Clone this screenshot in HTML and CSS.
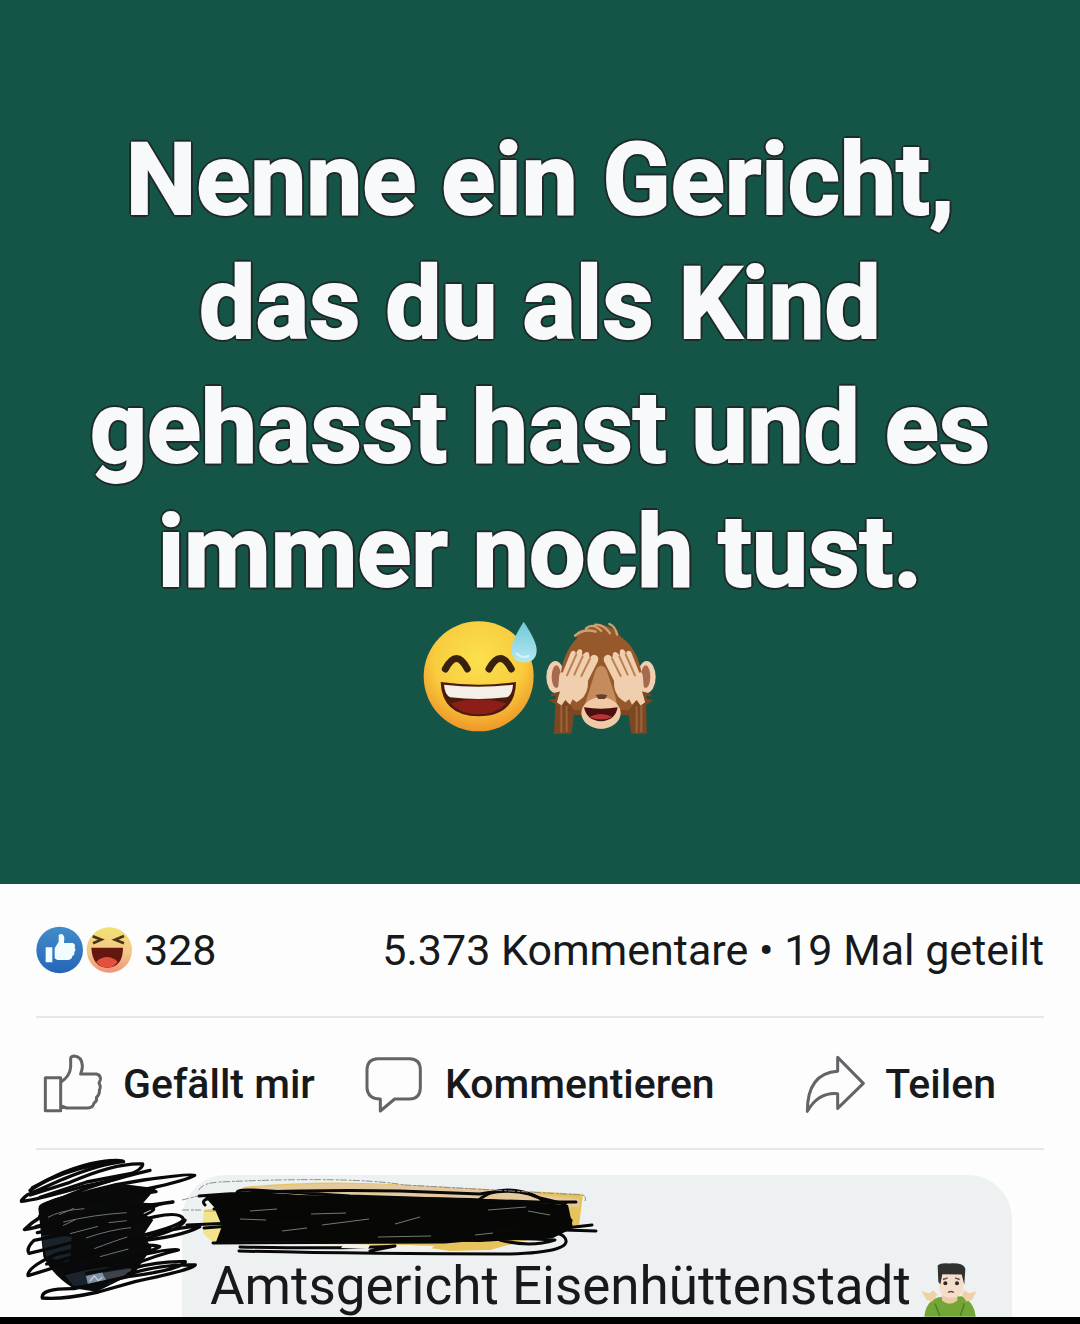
FILE: index.html
```html
<!DOCTYPE html>
<html lang="de">
<head>
<meta charset="utf-8">
<meta name="viewport" content="width=device-width, initial-scale=1">
<title>Beitrag</title>
<link rel="stylesheet" href="styles.css">
</head>
<body>
<main class="post">
  <section class="banner">
    <h1 class="banner-text">Nenne ein Gericht,<br>das du als Kind<br>gehasst hast und es<br>immer noch tust.</h1>
    <div class="banner-emojis">
      <svg class="emoji" viewBox="63 57 348 348" role="img" aria-label="Lachen mit Schweißtropfen">
        <defs>
          <radialGradient id="face" cx=".5" cy=".35" r=".68"><stop offset="0" stop-color="#fbe04f"/><stop offset=".6" stop-color="#f8cc3d"/><stop offset="1" stop-color="#ee8f25"/></radialGradient>
          <linearGradient id="drop" x1="0" y1="0" x2="0" y2="1"><stop offset="0" stop-color="#72c8d6"/><stop offset="1" stop-color="#b4e8f2"/></linearGradient>
        </defs>
        <circle cx="236" cy="229" r="165" fill="url(#face)"/>
        <path d="M136 207Q170 144 202 207M267 207Q301 144 334 207" fill="none" stroke="#38210e" stroke-width="21" stroke-linecap="round"/>
        <path d="M122 246Q236 262 348 246Q347 348 235 349Q126 347 122 246Z" fill="#4b1b0d"/>
        <path d="M151 310Q235 285 319 310Q291 343 235 343Q180 343 151 310Z" fill="#8c1d17"/>
        <path d="M132 254Q236 266 339 254Q337 286 320 292Q235 302 151 292Q134 284 132 254Z" fill="#f4f0e8"/>
        <path d="M371 65Q334 124 334 149Q336 187 373 187Q410 186 410 149Q409 122 371 65Z" fill="url(#drop)"/>
        <path d="M350 160q14 16 36 8" fill="none" stroke="#d2f5fa" stroke-width="6" stroke-linecap="round"/>
      </svg>
      <svg class="emoji" viewBox="429 57 348 348" role="img" aria-label="Affe hält sich die Augen zu">
        <path d="M467 285L462 401H514L522 345H686L694 401H740L738 285Z" fill="#7d4722"/>
        <path d="M484 398V315M500 396V318M710 398V318M724 397V310" stroke="#9b6439" stroke-width="6"/>
        <ellipse cx="466" cy="231" rx="27" ry="48" fill="#f1ceb0"/><ellipse cx="740" cy="231" rx="27" ry="48" fill="#f1ceb0"/>
        <ellipse cx="469" cy="230" rx="14" ry="34" fill="#a66b4d"/><ellipse cx="737" cy="230" rx="14" ry="34" fill="#a66b4d"/>
        <path d="M480 270Q477 168 533 112L522 108L544 99L532 94L559 87Q566 71 607 74Q651 84 660 109Q726 151 730 270L688 330H522Z" fill="#97582b"/>
        <path d="M525 107Q552 84 587 95M558 85Q579 67 604 93M586 74Q610 72 630 100M628 72Q647 80 651 104" fill="none" stroke="#d0a170" stroke-width="7" stroke-linecap="round"/>
        <path d="M587 210Q603 185 620 210L647 293L657 340Q645 384 603 386Q558 384 546 340L561 293Z" fill="#c58b5d"/>
        <ellipse cx="603" cy="339" rx="59" ry="47" fill="#efc9a8"/>
        <path d="M587 286Q603 279 622 286L615 297H595Z" fill="#66402e"/>
        <path d="M552 322Q603 330 653 322Q646 362 603 364Q560 362 552 322Z" fill="#4a1010"/>
        <path d="M568 351Q602 333 637 351Q603 366 568 351Z" fill="#b73534"/>
        <g id="hand">
          <path d="M471 309L477 235Q478 213 488 218L509 165Q515 148 525 154L528 161Q535 142 546 151L547 167Q559 150 567 160L569 174Q581 157 593 170Q598 178 590 191L564 242Q566 281 540 300L530 307L518 298L510 314L496 300L485 316Z" fill="#efcfae"/>
          <path d="M501 226L529 163M523 224L548 169M544 228L570 176" fill="none" stroke="#bd8056" stroke-width="6" stroke-linecap="round"/>
        </g>
        <use href="#hand" transform="translate(1206 0) scale(-1 1)"/>
        <path d="M453 286L474 280L468 300L456 302L475 315M752 286L732 280L738 300L750 302L731 315" fill="none" stroke="#7d4722" stroke-width="8"/>
      </svg>
    </div>
  </section>

  <section class="stats">
    <svg class="reactions" viewBox="48 75 288 150" role="img" aria-label="Gefällt mir und Haha">
      <defs>
        <linearGradient id="blue" x1="0" y1="0" x2="0" y2="1"><stop offset="0" stop-color="#438cca"/><stop offset="1" stop-color="#2565b8"/></linearGradient>
        <linearGradient id="haha" x1="0" y1="0" x2="0" y2="1"><stop offset="0" stop-color="#f2e171"/><stop offset=".55" stop-color="#f3c88a"/><stop offset="1" stop-color="#ee9277"/></linearGradient>
      </defs>
      <circle cx="119" cy="150" r="70" fill="url(#blue)"/>
      <path d="M77 142H97V187H77ZM104 145L116 125V105Q129 97 133 113L132 129H158Q168 132 164 143Q169 150 163 156Q165 165 157 168Q156 179 145 180H112L104 175Z" fill="#f1fcff"/>
      <circle cx="268" cy="150" r="68" fill="url(#haha)"/>
      <path d="M218 109L244 119L219 130M312 108L285 119L312 130" fill="none" stroke="#4b3516" stroke-width="8"/>
      <path d="M214 143H309Q309 201 262 203Q217 201 214 143Z" fill="#64170f"/>
      <path d="M229 185Q261 157 293 185Q283 202 262 203Q239 202 229 185Z" fill="#e4503d"/>
    </svg>
    <span class="reaction-count">328</span>
    <span class="share-info">5.373 Kommentare • 19 Mal geteilt</span>
  </section>

  <section class="actions">
    <button class="action" type="button">
      <svg class="action-icon" viewBox="69 69 180 180" aria-hidden="true"><path d="M76 140H122V239H76ZM124 152Q150 135 152 108V82Q153 75 163 75Q185 77 187 103Q188 113 182 129H229Q243 132 241 147L237 156Q244 168 238 177Q240 190 229 200Q232 210 222 216Q219 231 203 231H140L124 225"/></svg>
      <span>Gefällt mir</span>
    </button>
    <button class="action" type="button">
      <svg class="action-icon" viewBox="1035 72 180 180" aria-hidden="true"><path d="M1073 86H1169Q1201 87 1201 119V174Q1200 207 1168 207H1124L1081 243V207Q1043 207 1041 174V119Q1042 87 1073 86Z"/></svg>
      <span>Kommentieren</span>
    </button>
    <button class="action action-share" type="button">
      <svg class="action-icon" viewBox="255 69 180 180" aria-hidden="true"><path d="M353 79L430 157L353 232V188Q295 183 262 241Q262 127 353 121Z"/></svg>
      <span>Teilen</span>
    </button>
  </section>

  <article class="comment">
    <svg class="avatar" viewBox="0 30 546 501" role="img" aria-label="Unkenntlich gemachtes Profilbild">
      <path d="M115 205Q150 167 250 158L350 130L468 145L430 188L490 192L430 220L460 240L430 285L455 324L405 398L290 455L220 445Q157 405 130 350Z" fill="#090a0b"/>
      <path d="M123 285L215 290L210 370L138 350ZM190 400L315 382L404 384L330 430L220 438Z" fill="#1a232c"/>
      <path d="M310 398L404 384L370 408L318 420Z" fill="#3d424b"/>
      <path d="M258 408L307 397L320 424L264 434Z" fill="#7e91a5"/>
      <path d="M270 423l13-15 12 14 12-10" fill="none" stroke="#c0cfda" stroke-width="4"/>
      <g fill="none" stroke="#090909" stroke-width="10" stroke-linecap="round" stroke-linejoin="round">
        <path d="M90 151Q190 85 300 66Q365 57 371 65Q300 72 188 118L83 164Q62 180 64 184Q105 181 245 141Q430 104 428 72Q350 67 210 127L91 165"/>
        <path d="M97 143Q190 92 300 72L355 66M120 172L260 126L395 100M450 91Q290 128 181 176Q113 196 122 204Q280 141 431 120Q579 99 584 106Q560 121 440 147L250 186Q114 218 119 231Q270 177 468 155Q445 144 376 151L191 199Q112 228 73 269Q140 256 270 220L519 186Q430 197 310 243L112 278"/>
        <path d="M108 260Q320 201 416 205Q507 196 414 234L224 277L102 301Q77 325 87 340Q230 309 395 249Q540 204 551 239Q537 261 372 300L170 342Q81 382 84 407Q220 367 415 291Q570 255 599 260Q540 291 403 304L193 358"/>
        <path d="M140 372Q405 300 479 320Q421 350 302 374L190 402M388 307Q540 274 555 241M400 350Q526 322 535 330Q466 346 397 376L260 400M397 385Q480 362 556 365Q543 389 384 410L222 446Q120 445 127 474Q186 480 295 456L405 425Q588 386 586 375Q487 372 385 402"/>
      </g>
      <path d="M144 232Q180 211 253 206M190 246Q280 224 380 218M189 257L226 239M258 294Q330 269 393 263M283 326Q340 304 382 291M300 350L385 327M210 281L294 259M177 224L222 205M326 248L380 242" fill="none" stroke="#6f7274" stroke-width="3"/>
    </svg>
    <div class="bubble">
      <svg class="author" viewBox="182 1175 430 81" role="img" aria-label="Unkenntlich gemachter Name">
        <path d="M204 1210L222 1208L244 1187Q320 1179 410 1185L583 1194L579 1226L490 1250L450 1251L410 1245L217 1243L203 1233Z" fill="#e7c45b"/>
        <path d="M244 1188Q350 1178 500 1191L579 1199V1207L245 1199Z" fill="#e4c99d"/>
        <path d="M204 1212H224V1238L213 1243L203 1233Z" fill="#f2e48d"/>
        <path d="M205 1197Q240 1189 300 1195L470 1198L568 1205L573 1228L553 1238L480 1242L390 1241L216 1242L222 1226L214 1207Z" fill="#070705"/>
        <g fill="none" stroke="#080808" stroke-width="3" stroke-linecap="round" stroke-linejoin="round">
          <path d="M199 1196Q280 1189 400 1191L480 1194Q525 1186 545 1202H576M205 1205Q196 1196 240 1196Q230 1189 253 1190L350 1196L566 1203M214 1209Q350 1199 483 1205Q550 1207 571 1220Q572 1230 540 1231L592 1225M187 1225L282 1221L596 1231M204 1228Q360 1215 500 1231L571 1229M213 1243L445 1242Q505 1236 555 1240Q530 1248 500 1240M239 1251Q360 1254 510 1254Q574 1252 565 1238Q560 1231 548 1235M240 1247Q350 1249 395 1246L370 1251"/>
          <path d="M475 1203Q500 1180 540 1198L565 1204M490 1218Q520 1205 568 1219"/>
        </g>
        <path d="M250 1211L277 1209M240 1219L266 1220M282 1231L307 1228M311 1214L346 1213M322 1225L369 1219M395 1224L420 1217M378 1237L431 1236M488 1210L526 1207M528 1211L550 1215M475 1235L493 1233" fill="none" stroke="#77786d" stroke-width="1"/>
        <path d="M344 1244L370 1245L368 1249L341 1248ZM400 1245L434 1246L430 1250L397 1250Z" fill="#f3f2ec"/>
        <path d="M182 1200L198 1196M182 1210H201M199 1190Q202 1183 220 1182Q350 1176 405 1185L582 1195Q587 1196 585 1201" fill="none" stroke="#8b8d8e" stroke-width="1" stroke-dasharray="7 2 3 1"/>
      </svg>
      <p class="comment-text">Amtsgericht Eisenhüttenstadt
        <svg class="shrug" viewBox="180 306 168 164" role="img" aria-label="Schulterzuckender Mann">
          <path d="M190 470Q194 423 232 411L302 408Q340 425 344 470Z" fill="#74a635"/>
          <path d="M222 430L236 467M310 430L298 467" stroke="#4f812e" stroke-width="5"/>
          <path d="M182 393L204 399L218 390L229 403L214 424L197 420ZM346 393L324 399L310 390L302 403L316 424L333 420Z" fill="#efd0a7"/>
          <path d="M243 402H289V421Q266 440 243 421Z" fill="#e9cda8"/>
          <path d="M236 342Q268 323 309 342L307 389Q298 413 270 413Q240 412 235 387Z" fill="#f5ddcc"/>
          <path d="M232 365L230 316Q240 307 264 310Q308 307 313 326L310 374L302 343L244 342L238 373Z" fill="#303130"/>
          <path d="M246 358l14-5M282 353l14 5M261 397q9-6 18 0" fill="none" stroke="#624c41" stroke-width="4"/>
          <circle cx="253" cy="369" r="6" fill="#302925"/><circle cx="288" cy="369" r="6" fill="#302925"/>
        </svg>
      </p>
    </div>
  </article>
</main>
</body>
</html>
```
FILE: styles.css
```css
* {
  box-sizing: border-box;
}

body {
  margin: 0;
  background: #fdfdfd;
  color: #17191b;
  font-family: Roboto, "Liberation Sans", sans-serif;
}

svg {
  display: block;
  flex: none;
}

.post {
  border-bottom: 7px solid #000;
}

.banner {
  padding: 118px 40px 149px;
  background: #145548;
  text-align: center;
}

.banner-text {
  margin: 0;
  color: #f8f9fa;
  font-size: 100px;
  font-weight: 700;
  line-height: 124px;
  -webkit-text-stroke: 2px #f8f9fa;
  text-shadow:
    3px 0 #20292a,
    -3px 0 #20292a,
    0 3px #20292a,
    0 -3px #20292a,
    2px 2px #20292a,
    -2px 2px #20292a,
    2px -2px #20292a,
    -2px -2px #20292a;
}

.banner-emojis {
  display: flex;
  justify-content: center;
  gap: 6px;
  padding-top: 5px;
}

.emoji {
  width: 116px;
  height: 116px;
}

.stats {
  display: flex;
  align-items: center;
  margin: 0 36px;
  height: 134px;
  border-bottom: 2px solid #e6e7e8;
  font-size: 43px;
  line-height: 48px;
}

.reactions {
  width: 96px;
  height: 50px;
}

.reaction-count {
  margin-left: 12px;
}

.share-info {
  margin-left: auto;
}

.actions {
  display: flex;
  align-items: center;
  gap: 50px;
  margin: 0 36px;
  padding: 2px 48px 0 7px;
  height: 132px;
  border-bottom: 2px solid #e6e7e8;
}

.action {
  display: flex;
  align-items: center;
  gap: 20px;
  padding: 0;
  border: 0;
  background: none;
  color: #17191b;
  font: 500 41px/48px Roboto, "Liberation Sans", sans-serif;
  white-space: nowrap;
}

.action-share {
  margin-left: auto;
}

.action-icon {
  width: 60px;
  height: 60px;
  fill: none;
  stroke: #626467;
  stroke-width: 9px;
  stroke-linejoin: round;
}

.comment {
  display: flex;
}

.avatar {
  position: relative;
  width: 182px;
  height: 167px;
  overflow: visible;
}

.bubble {
  flex: 1;
  margin: 25px 68px 0 0;
  border-radius: 44px 44px 0 0;
  background: #eef1f2;
}

.author {
  width: 430px;
  height: 81px;
}

.comment-text {
  display: flex;
  align-items: center;
  gap: 10px;
  margin: 0;
  padding-left: 28px;
  font-size: 53px;
  line-height: 61px;
  white-space: nowrap;
}

.shrug {
  align-self: flex-end;
  width: 56px;
  height: 55px;
}
```
